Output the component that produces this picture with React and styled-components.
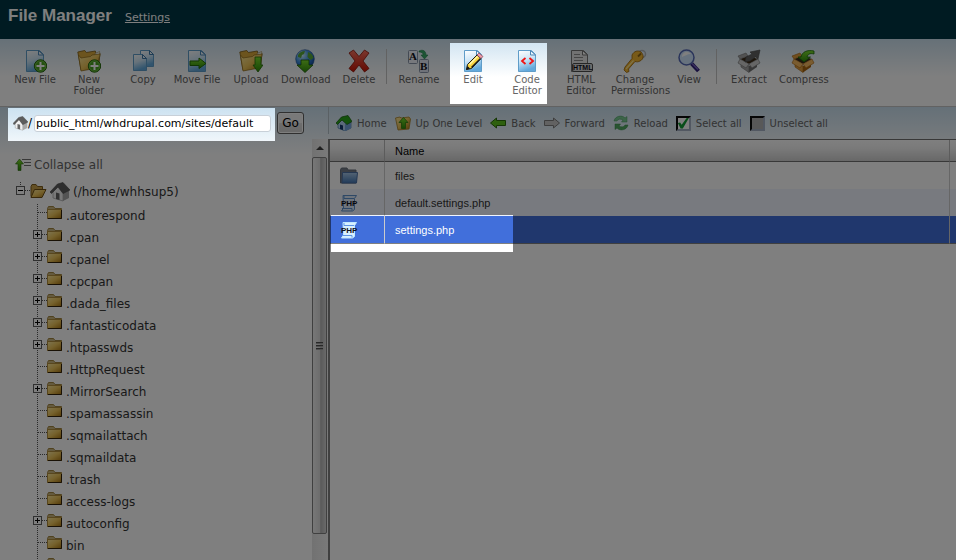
import React, { useState } from 'react';
import styled, { createGlobalStyle } from 'styled-components';

// areas that stay bright while the rest of the page is shaded
const spotlights = [
    { left: 450, top: 43, right: 547, bottom: 104 },
    { left: 8, top: 108, right: 275, bottom: 141 },
    { left: 331, top: 215, right: 513, bottom: 252 },
]

const cutOut = ({ left, top, right, bottom }) =>
    `${left}px ${top}px, ${right}px ${top}px, ${right}px ${bottom}px, ${left}px ${bottom}px, ${left}px ${top}px, 0 0`

const shadePath = `polygon(evenodd, 0 0, 100% 0, 100% 100%, 0 100%, 0 0, ${spotlights.map(cutOut).join(', ')})`

const folders = [
    { name: '.autorespond' },
    { name: '.cpan', children: true },
    { name: '.cpanel', children: true },
    { name: '.cpcpan', children: true },
    { name: '.dada_files', children: true },
    { name: '.fantasticodata', children: true },
    { name: '.htpasswds', children: true },
    { name: '.HttpRequest' },
    { name: '.MirrorSearch', children: true },
    { name: '.spamassassin' },
    { name: '.sqmailattach' },
    { name: '.sqmaildata' },
    { name: '.trash' },
    { name: 'access-logs' },
    { name: 'autoconfig', children: true },
    { name: 'bin' },
]

/* ---------- styles ---------- */

const GlobalStyle = createGlobalStyle`
    body {
        margin: 0;
        background: #fff;
        color: #333;
        font: 12px Verdana, "DejaVu Sans", sans-serif;
        overflow: hidden;
    }
    button, input {
        font-family: inherit;
        color: inherit;
    }
`

const Shade = styled.div`
    position: fixed;
    inset: 0;
    background: rgba(0, 0, 0, 0.5);
    clip-path: ${shadePath};
    pointer-events: none;
`

const GradientSvg = styled.svg`
    position: absolute;
    width: 0;
    height: 0;
`

const Screen = styled.div`
    height: 100vh;
    display: flex;
    flex-direction: column;
`

const Header = styled.header`
    flex: none;
    height: 39px;
    box-sizing: border-box;
    padding: 6px 8px;
    display: flex;
    align-items: baseline;
    gap: 13px;
    background-color: #003745;
    color: #fff;
`

const Title = styled.h1`
    margin: 0;
    font: bold 17px/20px Arial, "Liberation Sans", sans-serif;
`

const SettingsLink = styled.a`
    font-size: 11px;
    color: #fff;
`

const Toolbar = styled.div`
    flex: none;
    height: 68px;
    box-sizing: border-box;
    padding: 10px 8px 0;
    display: flex;
    align-items: flex-start;
    border-bottom: 1px solid #c4c4c4;
    background: linear-gradient(#cde2f0, #fff 38px);
`

const ToolButton = styled.button`
    flex: none;
    width: 54px;
    padding: 0 3px;
    border: 0;
    background: none;
    display: block;
    font-size: 10px;
    line-height: 11px;
    color: #666;
    cursor: pointer;

    span {
        display: block;
        text-align: center;
    }
`

const Icon24 = styled.svg`
    display: block;
    width: 24px;
    height: 24px;
    margin: 0 auto 1px;
`

const Icon16 = styled.svg`
    flex: none;
    width: 16px;
    height: 16px;
`

const IconText = styled.text`
    font: bold ${({ $size }) => $size}px ${({ $face }) => $face || '"Liberation Serif", serif'};
    fill: #101018;
`

const Separator = styled.div`
    flex: none;
    width: 5px;
    height: 35px;
    border-left: 1px solid #c4c4c4;
`

const Main = styled.main`
    flex: 1;
    min-height: 0;
    display: flex;
    background: linear-gradient(#cbe1f0, #fff 48px);
`

const SidebarContainer = styled.aside`
    flex: none;
    width: 328px;
    display: flex;
    flex-direction: column;
`

const PathForm = styled.form`
    flex: none;
    height: 32px;
    padding-left: 13px;
    display: flex;
    align-items: center;
`

const PathLabel = styled.label`
    display: flex;
    align-items: center;
    width: 21px;
    color: #000;
`

const PathInput = styled.input`
    width: 237px;
    height: 17px;
    box-sizing: border-box;
    padding: 0 1px;
    border: 1px solid #c8d0d8;
    border-radius: 3px;
    background-color: #fff;
    font-size: 11px;
    color: #000;
`

const GoButton = styled.button`
    width: 27px;
    height: 22px;
    margin-left: 6px;
    padding: 0;
    border: 1px solid #606060;
    border-radius: 3px;
    background: linear-gradient(#f2f2f2 50%, #dcdcdc 50%, #d0d0d0);
    box-shadow: inset 0 0 0 1px #fcfcfc;
    font-size: 12px;
    color: #000;
`

const TreePane = styled.div`
    flex: 1;
    min-height: 0;
    display: flex;
`

const Tree = styled.nav`
    flex: 1;
    min-width: 0;
    overflow: hidden;
    padding: 18px 0 0 15px;
    box-sizing: border-box;
`

const CollapseButton = styled.button`
    display: flex;
    align-items: center;
    gap: 3px;
    height: 16px;
    margin-bottom: 9px;
    padding: 0;
    border: 0;
    background: none;
    font-size: 12px;
    color: #666;
`

const HouseSvg = styled.svg`
    flex: none;
    width: ${({ $size }) => $size}px;
    height: ${({ $size }) => $size}px;
`

const RootRow = styled.div`
    display: flex;
    height: 22px;
    padding-left: 1px;
    line-height: 20px;

    ${HouseSvg} {
        margin: 0 3px;
    }
`

const FolderList = styled.ul`
    list-style: none;
    margin: 0;
    padding: 0 0 0 18px;
    line-height: 24px;
`

const FolderRow = styled.li`
    display: flex;
    height: 22px;
`

const Toggle = styled.button`
    flex: none;
    padding: 0;
    border: 0;
    background: none;
`

const BranchSvg = styled.svg`
    flex: none;
    display: block;
    width: 14px;
    height: 22px;
`

const FolderSvg = styled.svg`
    flex: none;
    width: 15px;
    height: 13px;
    margin: 2px 4px 0 0;
`

const OpenFolderSvg = styled.svg`
    flex: none;
    width: 17px;
    height: 14px;
    margin-top: 2px;
`

const FolderLink = styled.a`
    color: #333;
    text-decoration: none;
`

const ScrollTrack = styled.div`
    flex: none;
    width: 16px;
    padding-bottom: 26px;
    display: flex;
    flex-direction: column;
    background: linear-gradient(to right, #e4e4e4, #f4f4f4);
`

const ScrollUp = styled.button`
    flex: none;
    height: 18px;
    padding: 0;
    border: 0;
    background: none;
    display: flex;
    align-items: center;
    justify-content: center;

    &::before {
        content: '';
        border: 4px solid transparent;
        border-top: 0;
        border-bottom-color: #404040;
    }
`

const ScrollThumb = styled.div`
    flex: 1;
    width: 15px;
    box-sizing: border-box;
    border: 1px solid #808080;
    border-radius: 2px;
    display: flex;
    align-items: center;
    justify-content: center;
    background: linear-gradient(to right, #f0f0f0, #dcdcdc 50%, #b4b4b4 60%, #d4d4d4);
`

const Grip = styled.div`
    width: 7px;
    height: 8px;
    background: repeating-linear-gradient(#505050 0 1px, #a0a0a0 1px 2px, transparent 2px 3px);
`

const FilesContainer = styled.section`
    flex: 1;
    min-width: 0;
    display: flex;
    flex-direction: column;
`

const NavBar = styled.div`
    flex: none;
    height: 32px;
    padding-left: 8px;
    display: flex;
    align-items: center;
    gap: 8px;
    background: linear-gradient(#b4c0c8, #b4c0c8) 0 0 / 1px 27px no-repeat;
`

const NavButton = styled.button`
    display: flex;
    align-items: center;
    gap: 5px;
    padding: 0;
    border: 0;
    background: none;
    font-size: 10px;
    color: #666;
    white-space: nowrap;
`

const CheckLabel = styled.label`
    display: flex;
    align-items: center;
    gap: 5px;
    font-size: 10px;
    color: #666;
    white-space: nowrap;
`

const CheckBox = styled.input`
    appearance: none;
    width: 15px;
    height: 15px;
    margin: 0;
    border: 2px solid;
    border-color: #0c0c0c #a4b0c4 #a4b0c4 #0c0c0c;
    background-color: ${({ $filled }) => $filled ? '#b0b0b0' : '#fff'};

    &:checked::after {
        content: '';
        display: block;
        height: 11px;
        background-color: #149c34;
        clip-path: polygon(0 50%, 20% 45%, 35% 65%, 80% 5%, 100% 5%, 45% 100%, 25% 100%);
    }
`

const TableBox = styled.div`
    flex: 1;
    border-left: 2px solid #808080;
    border-top: 1px solid #707070;
    background-color: #fff;
`

const FileTable = styled.table`
    width: 100%;
    table-layout: fixed;
    border-spacing: 0;
    font: 11px Arial, "Liberation Sans", sans-serif;
`

const IconCol = styled.col`
    width: 55px;
`

const EdgeCol = styled.col`
    width: 6px;
`

const HeadCell = styled.th`
    height: 21px;
    padding: 0 10px;
    border-bottom: 1px solid #707070;
    border-right: 1px solid #b8b8b8;
    background: linear-gradient(#fff, #f4f4f4 40%, #d0d0d0);
    font-weight: normal;
    text-align: left;
    color: #000;

    &:last-child {
        padding: 0;
        border-right: 0;
    }
`

const Cell = styled.td`
    height: 27px;
    padding: 0 10px;

    &:last-child {
        padding: 0;
    }
`

const FileRow = styled.tr`
    color: ${({ $selected }) => $selected ? '#fff' : '#333'};
    background-color: ${({ $selected, $striped }) => $selected ? '#416fdb' : $striped ? '#f0f5fe' : '#fff'};

    ${Cell} {
        border-right: 1px solid #ccc;
        border-bottom: ${({ $selected }) => $selected ? '1px solid #808080' : '0'};
    }

    ${Cell}:last-child {
        border-right: 0;
    }
`

const RowSvg = styled.svg`
    display: block;
    width: 18px;
    height: 18px;
`

/* ---------- icons ---------- */

const sans = '"Liberation Sans", sans-serif'

const Gradients = () => (
    <GradientSvg aria-hidden='true'>
        <defs>
            <linearGradient id='paper' x1='0' y1='0' x2='0.3' y2='1'>
                <stop offset='0' stopColor='#ffffff' />
                <stop offset='0.5' stopColor='#cfe6f6' />
                <stop offset='1' stopColor='#62a9dc' />
            </linearGradient>
            <linearGradient id='gold' x1='0' y1='0' x2='1' y2='1'>
                <stop offset='0' stopColor='#fdeaa0' />
                <stop offset='0.5' stopColor='#ecc45a' />
                <stop offset='1' stopColor='#a87410' />
            </linearGradient>
            <linearGradient id='green' x1='0' y1='0' x2='0' y2='1'>
                <stop offset='0' stopColor='#7ddc2c' />
                <stop offset='1' stopColor='#2c8a08' />
            </linearGradient>
            <linearGradient id='red' x1='0' y1='0' x2='0' y2='1'>
                <stop offset='0' stopColor='#f5705c' />
                <stop offset='1' stopColor='#c81404' />
            </linearGradient>
            <linearGradient id='steel' x1='0' y1='0' x2='0' y2='1'>
                <stop offset='0' stopColor='#a8c8e8' />
                <stop offset='1' stopColor='#4478b4' />
            </linearGradient>
            <radialGradient id='globe' cx='0.35' cy='0.3' r='0.8'>
                <stop offset='0' stopColor='#c8ecff' />
                <stop offset='0.5' stopColor='#3c90e0' />
                <stop offset='1' stopColor='#0c3c94' />
            </radialGradient>
        </defs>
    </GradientSvg>
)

const Page = () => (
    <>
        <path d='M3.5 1.5h13l4 4v17h-17z' fill='url(#paper)' stroke='#5f9cc8' />
        <path d='M15.5 1.5v4.5h5z' fill='#e8f4fc' stroke='#4c88b8' />
    </>
)

const OpenFolder = () => (
    <>
        <path d='M.8 3l7-1.5 1.5 2 9-1.5L19 5l4-.8-1.5 14L4 21z' fill='#d8a83c' stroke='#7c5a14' strokeWidth='.8' />
        <path d='M18 4.5l4.6-2 .4 5-5 2z' fill='#f4f4ec' stroke='#9c8a54' strokeWidth='.6' />
        <path d='M4 9l9.5-1.5L15 6l8-1-3 14L4 22 1.5 6z' fill='url(#gold)' stroke='#8c6818' strokeWidth='.7' />
    </>
)

const PlusBadge = () => (
    <>
        <circle cx='17.5' cy='17' r='6.2' fill='#48a020' stroke='#24640c' />
        <circle cx='17.5' cy='17' r='5.2' fill='none' stroke='#8cd45c' strokeWidth='.6' />
        <path d='M17.5 13v8M13.5 17h8' stroke='#fff' strokeWidth='2' />
    </>
)

const Box = ({ light, mid, dark }) => (
    <>
        <path d='M4 13l8 4v6.5L4 18z' fill={mid} stroke={dark} strokeWidth='.6' />
        <path d='M12 17l8-4v5l-8 5.5z' fill={dark} />
        <path d='M3 10l8-3 10 3-9 5z' fill='#3c2c18' />
        <path d='M3 10l9 5-3 4-8-5zM21 10l-9 5 3 4 8-5z' fill={light} stroke={dark} strokeWidth='.6' />
        <path d='M3 10L1 7l8-3 2 3z' fill={mid} stroke={dark} strokeWidth='.6' />
    </>
)

const toolIcons = {
    newFile: <><Page /><PlusBadge /></>,
    newFolder: <><OpenFolder /><PlusBadge /></>,
    copy: (
        <>
            <path d='M9.5 1.5h9l4 4v12h-13z' fill='url(#paper)' stroke='#5f9cc8' />
            <path d='M18.5 1.5v4h4z' fill='#e8f4fc' stroke='#3c78a8' />
            <path d='M2.5 5.5h9l4 4v12h-13z' fill='url(#paper)' stroke='#5f9cc8' />
            <path d='M11.5 5.5v4h4z' fill='#e8f4fc' stroke='#3c78a8' />
        </>
    ),
    move: (
        <>
            <Page />
            <path d='M5 12h9V9l7 5.5-7 5v-3H5z' fill='url(#green)' stroke='#246c08' />
        </>
    ),
    upload: (
        <>
            <OpenFolder />
            <path d='M16 8h6v8h2l-5 7-5-7h2z' fill='url(#green)' stroke='#246c08' strokeWidth='.8' />
        </>
    ),
    download: (
        <>
            <circle cx='12' cy='10' r='9.3' fill='url(#globe)' stroke='#1c4888' strokeWidth='.6' />
            <path d='M5 6c2-3 4-4 7-4l-1 3-2 1-1 3-3-1zM15 3c3 1 5 3 5.5 6l-3 2-3-3z' fill='#58a838' />
            <path d='M8 11h8v5h4l-8 7.5L4 16h4z' fill='url(#green)' stroke='#1c5c08' strokeWidth='.8' />
        </>
    ),
    remove: (
        <path d='M2 4l4.5-3L12 7.5 17.5 1 22 4l-6 8 6 7.5-4.5 3.5-5.5-7-5.5 7L2 19.5 8 12z' fill='url(#red)' stroke='#8c1408' strokeWidth='.8' />
    ),
    rename: (
        <>
            <rect x='1.5' y='1.5' width='9' height='13' rx='1' fill='#eef2fa' stroke='#8894a8' />
            <rect x='12.5' y='10.5' width='9' height='13' rx='1' fill='#dfe5f2' stroke='#8894a8' />
            <IconText x='2' y='11' $size={11}>A</IconText>
            <IconText x='13' y='21' $size={11}>B</IconText>
            <path d='M12 2c4-2 7 0 7 4h2l-3.5 4L14 6h2c0-2-1-3-4-3z' fill='#38a868' stroke='#187840' strokeWidth='.5' />
        </>
    ),
    edit: (
        <>
            <Page />
            <path d='M5.5 20.5l1-5L16 6l4 3.5-9.5 10z' fill='#f8d440' stroke='#201c10' />
            <path d='M8.5 15.5l8-8' stroke='#fff8b0' strokeWidth='1.5' />
            <path d='M10.5 18.5l9-9' stroke='#1c1c1c' strokeWidth='1.5' />
            <path d='M16 6l2-2 4 3.5-2 2z' fill='#f09cac' stroke='#7c4450' strokeWidth='.7' />
            <path d='M5 21l1.5-4 2.5 2.5z' fill='#141414' />
        </>
    ),
    code: (
        <>
            <Page />
            <path d='M10.5 9L7 12l3.5 3M14.5 9l3.5 3-3.5 3' fill='none' stroke='#f01414' strokeWidth='1.8' />
        </>
    ),
    html: (
        <>
            <path d='M2.5 1.5h12l4 4v17h-16z' fill='#e4e4e4' stroke='#747474' />
            <path d='M13.5 1.5V6h5z' fill='#fff' stroke='#747474' />
            <path d='M5 5.5h6M5 8.5h9M5 11.5h9' stroke='#8c8c8c' />
            <rect x='3.5' y='14.5' width='20' height='8' rx='1.5' fill='#d8d8d8' stroke='#4c4c4c' />
            <IconText x='4' y='21' $size={7} $face={sans}>HTML</IconText>
        </>
    ),
    key: (
        <>
            <circle cx='19' cy='5' r='3.5' fill='none' stroke='#b0b4b8' strokeWidth='1.5' />
            <path d='M9 6c2-4 6-5 9-3 3 3 3 7-1 9-2 1-3 1-5 .5L5.5 20l.5 2.5-2.5 1L1 21l1-3 7-8.5z' fill='#f0b430' stroke='#9c6408' strokeWidth='.8' />
            <path d='M3 20l7.5-8.5' stroke='#fce490' strokeWidth='1.2' />
            <path d='M15 7.5l3-3' stroke='#8c6414' strokeWidth='1.8' />
        </>
    ),
    view: (
        <>
            <path d='M14.5 14.5l7 7.5' stroke='#30207c' strokeWidth='4' />
            <path d='M14.5 14l6.5 6.5' stroke='#7864c0' strokeWidth='1.2' />
            <circle cx='9.5' cy='8.5' r='7.5' fill='#cfe4fc' stroke='#5468b4' strokeWidth='1.5' />
            <path d='M5 8c0-3 2-5 5-5 2 0 3 1 4 2-4 0-6 2-9 3z' fill='#fff' />
        </>
    ),
    extract: (
        <>
            <Box light='#cccccc' mid='#a4a4a4' dark='#707070' />
            <path d='M8 13l1-5 6-3-2-2 10-2-2 9-2.5-2-5.5 4z' fill='#606060' stroke='#484848' strokeWidth='.6' />
        </>
    ),
    compress: (
        <>
            <Box light='#f4b860' mid='#e09c3c' dark='#a86410' />
            <path d='M7 8h3c1-5 6-7.5 13-6v3c-4-1-6 0-7 3h3.5L13 13z' fill='url(#green)' stroke='#1c6c10' strokeWidth='.8' />
        </>
    ),
}

const Arrow = ({ right, fill, stroke }) => (
    <Icon16 viewBox='0 0 16 16'>
        <path
            d={right ? 'M.5 5.5h9V3l6 5-6 5v-2.5h-9z' : 'M15.5 5.5h-9V3l-6 5 6 5v-2.5h9z'}
            fill={fill}
            stroke={stroke}
        />
    </Icon16>
)

const navIcons = {
    home: (
        <Icon16 viewBox='0 0 16 16'>
            <path d='M2 7l5-3 8 3v6l-6 3-7-3z' fill='#b4d4f4' stroke='#4878a8' strokeWidth='.7' />
            <path d='M9 9l6-3v7l-6 3z' fill='#74a4dc' />
            <path d='M0 8l5.5-6L12 .5l4 6-5 3L6 5 1.5 9.5z' fill='#28a418' stroke='#145c0c' strokeWidth='.7' />
            <path d='M4 9.5l3 1V15l-3-1z' fill='#14386c' />
        </Icon16>
    ),
    up: (
        <Icon16 viewBox='0 0 16 16'>
            <path d='M.5 3L5 2l1 1 8-1 1.5 2L14 14 3 15z' fill='url(#gold)' stroke='#a47c24' strokeWidth='.8' />
            <path d='M8.5 2.5l4.5 5h-2.5v6h-4v-6H4z' fill='url(#green)' stroke='#2c7c10' strokeWidth='.8' />
        </Icon16>
    ),
    back: <Arrow fill='#5cc01c' stroke='#2c6c0c' />,
    forward: <Arrow right fill='#c4c4c4' stroke='#7c7c7c' />,
    reload: (
        <Icon16 viewBox='0 0 16 16'>
            <path d='M1 6c1-5 8-6.5 11-3l2-1.5V7H8.5L10 5C7.5 3.5 5 4 4 6z' fill='#78c890' stroke='#48985c' strokeWidth='.5' />
            <path d='M15 10c-1 5-8 6.5-11 3l-2 1.5V9h5.5L6 11c2.5 1.5 5 1 6-1z' fill='#50a860' stroke='#388848' strokeWidth='.5' />
        </Icon16>
    ),
}

const House = ({ size }) => (
    <HouseSvg viewBox='0 0 20 20' $size={size}>
        <path d='M3 9l5-5 5 6v9L3 16z' fill='#f0f0f0' stroke='#a4a4a4' strokeWidth='.7' />
        <path d='M13 10l6-2v8l-6 3z' fill='#a8a8a8' />
        <path d='M0 10l7.5-8L13 .5 20 8l-7 3.5L8 5l-6.5 6.5z' fill='#5c5c5c' stroke='#484848' strokeWidth='.6' />
        <path d='M6 10.5l3.5 1V18L6 17z' fill='#646464' />
    </HouseSvg>
)

const TreeFolder = () => (
    <FolderSvg viewBox='0 0 15 13'>
        <path d='M.5 2.5l1-2h5l1.5 2h6.5v10H.5z' fill='#c8b47c' stroke='#a08440' />
        <path d='M.5 3.5h14v9H.5z' fill='url(#gold)' stroke='#b08c3c' />
        <path d='M1 12.5h13.5V4' fill='none' stroke='#33220a' />
    </FolderSvg>
)

const Branch = ({ children, expanded, root }) => (
    <BranchSvg viewBox='0 0 14 22' shapeRendering='crispEdges'>
        <path d={root ? 'M4.5 0v4' : 'M4.5 0v22'} stroke='#555' strokeDasharray='1 1' />
        <path d='M5 8.5h9' stroke='#555' strokeDasharray='1 1' />
        {children && (
            <>
                <rect x='.5' y='4.5' width='8' height='8' fill='#fff' stroke='#606060' />
                <path d={expanded ? 'M2 8.5h5' : 'M2 8.5h5M4.5 6v5'} stroke='#000' />
            </>
        )}
    </BranchSvg>
)

const PhpIcon = ({ selected }) => (
    <RowSvg viewBox='0 0 18 18'>
        <path d='M3 1.5h13.5l-2 3v11l-2 1.5h-11l2-3z' fill={selected ? '#d8f0ff' : '#dce8f8'} stroke={selected ? '#c0e8ff' : '#5c90cc'} />
        <path d='M2 14.5h10v2M4 2v2.5h10' fill='none' stroke={selected ? '#5c94e4' : '#5c90cc'} />
        <IconText x='1' y='12' $size={8} $face={sans}>PHP</IconText>
    </RowSvg>
)

const FolderRowIcon = () => (
    <RowSvg viewBox='0 0 18 18'>
        <path d='M.5 2.5L1.5 1H7l1 2h8v13H.5z' fill='#747c88' stroke='#646c78' />
        <path d='M2.5 5.5h15l-1 10.5H2z' fill='url(#steel)' stroke='#4c70a4' />
    </RowSvg>
)

/* ---------- parts ---------- */

const Tool = ({ icon, children }) => (
    <ToolButton type='button'>
        <Icon24 viewBox='0 0 24 24'>{toolIcons[icon]}</Icon24>
        <span>{children}</span>
    </ToolButton>
)

function Tools() {
    return (
        <Toolbar>
            <Tool icon='newFile'>New File</Tool>
            <Tool icon='newFolder'>New Folder</Tool>
            <Tool icon='copy'>Copy</Tool>
            <Tool icon='move'>Move File</Tool>
            <Tool icon='upload'>Upload</Tool>
            <Tool icon='download'>Download</Tool>
            <Tool icon='remove'>Delete</Tool>
            <Separator />
            <Tool icon='rename'>Rename</Tool>
            <Tool icon='edit'>Edit</Tool>
            <Tool icon='code'>Code Editor</Tool>
            <Tool icon='html'>HTML Editor</Tool>
            <Tool icon='key'>Change Permissions</Tool>
            <Tool icon='view'>View</Tool>
            <Separator />
            <Tool icon='extract'>Extract</Tool>
            <Tool icon='compress'>Compress</Tool>
        </Toolbar>
    )
}

function Sidebar() {
    const [path, setPath] = useState('public_html/whdrupal.com/sites/default')

    return (
        <SidebarContainer>
            <PathForm onSubmit={(e) => e.preventDefault()}>
                <PathLabel htmlFor='path'>
                    <House size={15} />/
                </PathLabel>
                <PathInput id='path' aria-label='Path' value={path} onChange={(e) => setPath(e.target.value)} />
                <GoButton type='submit'>Go</GoButton>
            </PathForm>
            <TreePane>
                <Tree>
                    <CollapseButton type='button'>
                        <Icon16 viewBox='0 0 16 16'>
                            <path d='M4.5 2l4 5H6v6.5H3V7H.5z' fill='url(#green)' stroke='#2c6c10' strokeWidth='.6' />
                            <path d='M7 2.5h9M9 5.5h7M9 8.5h7' stroke='#707070' />
                        </Icon16>
                        Collapse all
                    </CollapseButton>
                    <RootRow>
                        <Toggle type='button' aria-label='Collapse home'><Branch root expanded children /></Toggle>
                        <OpenFolderSvg viewBox='0 0 17 14'>
                            <path d='M1 12.5v-10l1-2h4l1.5 2h5v4' fill='#c8a048' stroke='#7c5c1c' />
                            <path d='M1 13.5l3.5-8H16l-4 8z' fill='url(#gold)' stroke='#705014' />
                        </OpenFolderSvg>
                        <House size={20} />
                        (/home/whhsup5)
                    </RootRow>
                    <FolderList>
                        {folders.map((folder) => (
                            <FolderRow key={folder.name}>
                                {folder.children
                                    ? <Toggle type='button' aria-label={`Expand ${folder.name}`}><Branch children /></Toggle>
                                    : <Branch />}
                                <TreeFolder />
                                <FolderLink href='#'>{folder.name}</FolderLink>
                            </FolderRow>
                        ))}
                        <FolderRow>
                            <Branch />
                            <TreeFolder />
                        </FolderRow>
                    </FolderList>
                </Tree>
                <ScrollTrack>
                    <ScrollUp type='button' aria-label='Scroll up' />
                    <ScrollThumb><Grip /></ScrollThumb>
                </ScrollTrack>
            </TreePane>
        </SidebarContainer>
    )
}

function Files() {
    const [all, setAll] = useState(true)

    return (
        <FilesContainer>
            <NavBar>
                <NavButton type='button'>{navIcons.home}Home</NavButton>
                <NavButton type='button'>{navIcons.up}Up One Level</NavButton>
                <NavButton type='button'>{navIcons.back}Back</NavButton>
                <NavButton type='button'>{navIcons.forward}Forward</NavButton>
                <NavButton type='button'>{navIcons.reload}Reload</NavButton>
                <CheckLabel>
                    <CheckBox type='checkbox' checked={all} onChange={() => setAll(true)} />
                    Select all
                </CheckLabel>
                <CheckLabel>
                    <CheckBox type='checkbox' $filled checked={!all} onChange={() => setAll(false)} />
                    Unselect all
                </CheckLabel>
            </NavBar>
            <TableBox>
                <FileTable>
                    <colgroup>
                        <IconCol />
                        <col />
                        <EdgeCol />
                    </colgroup>
                    <thead>
                        <tr>
                            <HeadCell />
                            <HeadCell>Name</HeadCell>
                            <HeadCell />
                        </tr>
                    </thead>
                    <tbody>
                        <FileRow>
                            <Cell><FolderRowIcon /></Cell>
                            <Cell>files</Cell>
                            <Cell />
                        </FileRow>
                        <FileRow $striped>
                            <Cell><PhpIcon /></Cell>
                            <Cell>default.settings.php</Cell>
                            <Cell />
                        </FileRow>
                        <FileRow $selected>
                            <Cell><PhpIcon selected /></Cell>
                            <Cell>settings.php</Cell>
                            <Cell />
                        </FileRow>
                    </tbody>
                </FileTable>
            </TableBox>
        </FilesContainer>
    )
}

function App() {
    return (
        <>
            <GlobalStyle />
            <Gradients />
            <Screen>
                <Header>
                    <Title>File Manager</Title>
                    <SettingsLink href='#'>Settings</SettingsLink>
                </Header>
                <Tools />
                <Main>
                    <Sidebar />
                    <Files />
                </Main>
            </Screen>
            <Shade />
        </>
    )
}

export default App
